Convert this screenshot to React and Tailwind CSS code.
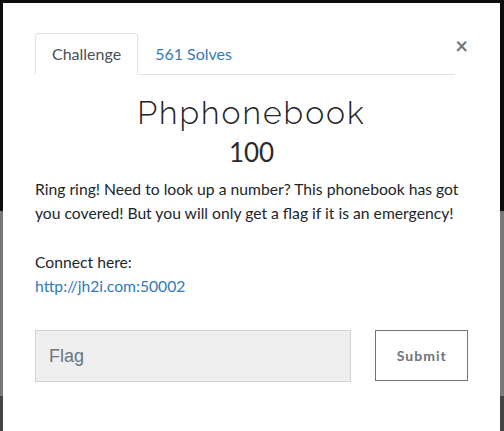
export default function App() {
  return (
    <div className="relative h-[431px] w-[504px] overflow-hidden bg-[#0d0d0d] font-['Lato',sans-serif]">
      <div className="absolute left-0 top-[211px] h-[185px] w-[504px] bg-[#787878]" />
      <div className="absolute left-0 top-[396px] h-[35px] w-[504px] bg-[#444]" />
      <div className="relative ml-[3px] mt-[3px] h-[428px] w-[497px] bg-white px-[32px] pt-[30px]">
        <div className="flex items-end border-b border-[#dee2e6] mr-[13px]">
          <div className="-mb-px rounded-t-[4px] border border-b-white border-[#dee2e6] px-[16px] py-[10px] text-[16px] leading-[20px] text-[#495057]">
            Challenge
          </div>
          <div className="px-[17px] py-[10px] text-[16px] leading-[20px] text-[#337ab7]">561 Solves</div>
        </div>
        <button className="absolute right-[32px] top-[32px] text-[22px] leading-none font-bold text-[#777]">
          ×
        </button>
        <h1 className="mt-[18px] text-center text-[32px] font-light leading-[40px] tracking-[2px] text-[#222] font-['Raleway','Lato',sans-serif]">
          Phphonebook
        </h1>
        <div className="mt-[2px] text-center text-[26px] leading-[34px] text-[#2a2a2a]">100</div>
        <p className="mt-[8px] text-[15.7px] leading-[24px] text-[#212529]">
          Ring ring! Need to look up a number? This phonebook has got you covered! But you will only get a flag if it is an emergency!
        </p>
        <p className="mt-[25px] text-[15.7px] leading-[24px] text-[#212529]">Connect here:</p>
        <a className="block text-[15.7px] leading-[24px] text-[#337ab7]" href="#">
          http://jh2i.com:50002
        </a>
        <div className="mt-[32px] flex items-start">
          <input
            className="h-[52px] w-[318px] border border-[#ced4da] bg-[#efefef] px-[13px] text-[18px] font-['Liberation_Sans',sans-serif] placeholder:text-[#6c757d] outline-none"
            placeholder="Flag"
          />
          <button className="ml-[24px] h-[51px] w-[93px] border border-[#6c757d] text-[14px] font-bold tracking-[1px] text-[#6c757d]">
            Submit
          </button>
        </div>
      </div>
    </div>
  );
}
